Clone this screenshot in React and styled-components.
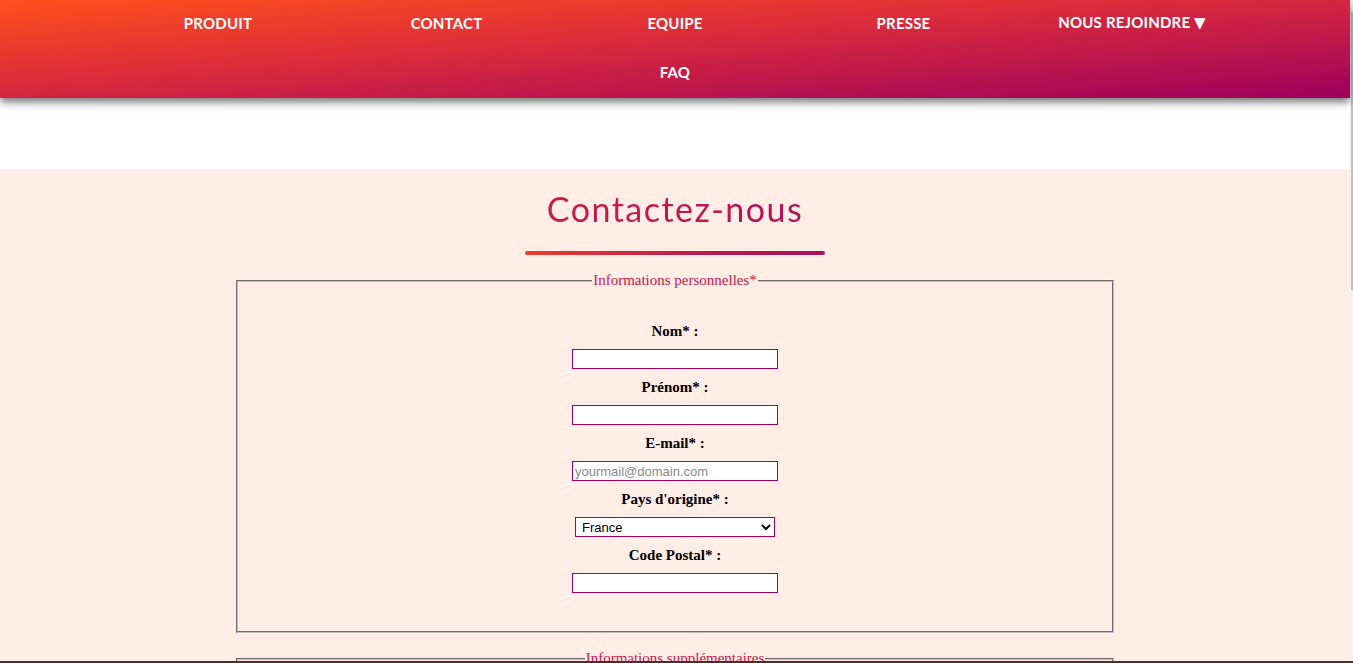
import React from "react";
import styled, { createGlobalStyle } from "styled-components";

const Global = createGlobalStyle`
  html, body { margin: 0; padding: 0; height: 100%; overflow: hidden; }
  body { background: #ffffff; font-family: "Liberation Serif", "Times New Roman", serif; }
  #root { height: 100%; }
`;

const Shell = styled.div`
  display: flex;
  height: 663px;
  position: relative;
  overflow: hidden;
`;

const Page = styled.div`
  flex: 1;
  min-width: 0;
  display: flex;
  flex-direction: column;
`;

const ScrollTrack = styled.div`
  width: 3px;
  background: #f1f1f1;
  padding-top: 12px;
  flex-shrink: 0;
`;

const ScrollThumb = styled.div`
  width: 2px;
  margin-left: 1px;
  height: 278px;
  background: #c1c1c1;
`;

const Header = styled.header`
  flex-shrink: 0;
  height: 98px;
  background: linear-gradient(to bottom right, #ff4f1d 0%, #d92a3c 45%, #9d005e 100%);
  box-shadow: 0 4px 8px rgba(0, 0, 0, 0.55);
  position: relative;
  z-index: 2;
  display: flex;
  justify-content: center;
`;

const NavList = styled.ul`
  list-style: none;
  margin: 0;
  padding: 0;
  width: 1142.5px;
  display: flex;
  flex-wrap: wrap;
  justify-content: center;
`;

const NavItem = styled.li`
  width: 228.5px;
  height: 49px;
  display: flex;
  align-items: center;
  justify-content: center;
  padding-bottom: 4px;
  box-sizing: border-box;
  color: #ffffff;
  font-family: "Lato", "DejaVu Sans", sans-serif;
  font-weight: 700;
  font-size: 15px;
  letter-spacing: 0.2px;
  text-transform: uppercase;
`;

const Spacer = styled.div`
  flex-shrink: 0;
  height: 71px;
  background: #ffffff;
`;

const Main = styled.main`
  flex: 1 0 auto;
  background: #ffede6;
  display: flex;
  flex-direction: column;
  align-items: center;
`;

const Title = styled.h1`
  margin: 20px 0 0;
  font-family: "Lato", "DejaVu Sans", sans-serif;
  font-weight: 400;
  font-size: 34px;
  letter-spacing: 1.5px;
  line-height: 40px;
  background: linear-gradient(to right, #cc1c46, #b3125a);
  -webkit-background-clip: text;
  background-clip: text;
  color: transparent;
`;

const Underline = styled.div`
  width: 300px;
  height: 4px;
  margin-top: 22px;
  border-radius: 2px;
  background: linear-gradient(to right, #e8402c, #c21e48 50%, #a4105c);
`;

const Fieldset = styled.fieldset`
  width: 65%;
  box-sizing: border-box;
  margin: ${(p) => p.$top}px 0 0;
  padding: 0 12px ${(p) => p.$bottom}px;
  border: 2px groove #c0c0c0;
  display: flex;
  flex-direction: column;
  align-items: center;
`;

const Legend = styled.legend`
  margin: 0 auto;
  padding: 0 1px;
  color: #c8174a;
  font-family: "Liberation Serif", "Times New Roman", serif;
  font-size: 15px;
`;

const Group = styled.div`
  display: flex;
  flex-direction: column;
  align-items: center;
  gap: 8px;
  margin-top: ${(p) => (p.$first ? 32 : 8)}px;
`;

const Label = styled.label`
  font-family: "Liberation Serif", "Times New Roman", serif;
  font-weight: 700;
  font-size: 15px;
  line-height: 20px;
  color: #000;
`;

const Input = styled.input`
  width: 206px;
  height: 20px;
  box-sizing: border-box;
  border: 1px solid #a0005a;
  padding: 1px 2px;
  font-family: "Liberation Sans", Arial, sans-serif;
  font-size: 13px;
  background: #fff;
  outline: none;
  &::placeholder { color: #8a8a8a; }
`;

const Select = styled.select`
  width: 200px;
  height: 20px;
  box-sizing: border-box;
  border: 1px solid #a0005a;
  border-radius: 0;
  padding: 0 2px;
  font-family: "Liberation Sans", Arial, sans-serif;
  font-size: 13px;
  background: #fff;
  color: #000;
`;

const BottomBar = styled.div`
  position: absolute;
  left: 0;
  right: 0;
  bottom: 0;
  height: 2px;
  background: #5b2530;
  z-index: 3;
`;

const navItems = ["Produit", "Contact", "Equipe", "Presse", "Nous rejoindre ▼", "FAQ"];

export default function App() {
  return (
    <>
      <Global />
      <Shell>
        <Page>
          <Header>
            <NavList>
              {navItems.map((n) => (
                <NavItem key={n}>{n}</NavItem>
              ))}
            </NavList>
          </Header>
          <Spacer />
          <Main>
            <Title>Contactez-nous</Title>
            <Underline />
            <Fieldset $top={17} $bottom={38}>
              <Legend>Informations personnelles*</Legend>
              <Group $first>
                <Label>Nom* :</Label>
                <Input type="text" />
              </Group>
              <Group>
                <Label>Prénom* :</Label>
                <Input type="text" />
              </Group>
              <Group>
                <Label>E-mail* :</Label>
                <Input type="email" placeholder="yourmail@domain.com" />
              </Group>
              <Group>
                <Label>Pays d'origine* :</Label>
                <Select defaultValue="France">
                  <option>France</option>
                  <option>Belgique</option>
                  <option>Suisse</option>
                  <option>Canada</option>
                </Select>
              </Group>
              <Group>
                <Label>Code Postal* :</Label>
                <Input type="text" />
              </Group>
            </Fieldset>
            <Fieldset $top={17} $bottom={40}>
              <Legend>Informations supplémentaires</Legend>
              <Group $first>
                <Label>Message :</Label>
                <Input type="text" />
              </Group>
            </Fieldset>
          </Main>
        </Page>
        <ScrollTrack>
          <ScrollThumb />
        </ScrollTrack>
        <BottomBar />
      </Shell>
    </>
  );
}
